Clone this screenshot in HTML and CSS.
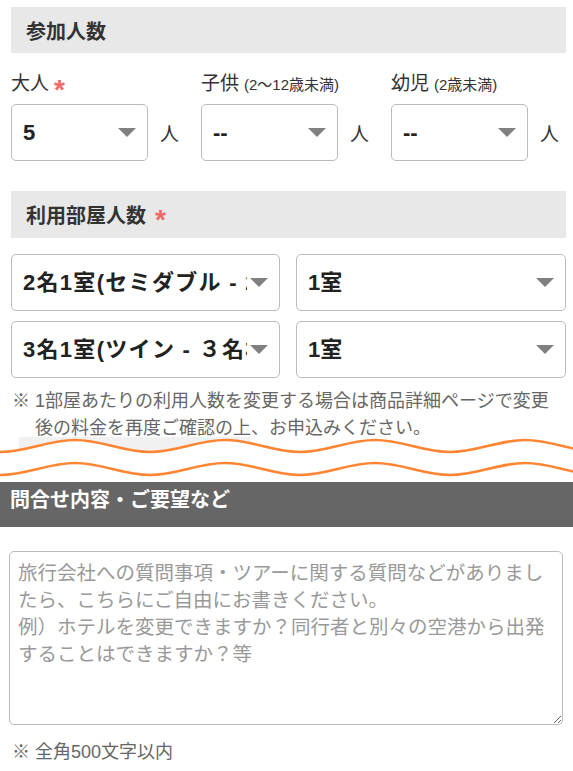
FILE: index.html
```html
<!DOCTYPE html>
<html lang="ja">
<head>
<meta charset="utf-8">
<title>参加人数</title>
<link rel="stylesheet" href="styles.css">
</head>
<body>
<div class="sec-head">参加人数</div>

<div class="pax">
  <div class="pax-col">
    <div class="pax-label">大人<span class="req">*</span></div>
    <div class="pax-row">
      <div class="sel sel-sm"><select><option>5</option></select></div>
      <span class="unit">人</span>
    </div>
  </div>
  <div class="pax-col">
    <div class="pax-label">子供 <small>(2〜12歳未満)</small></div>
    <div class="pax-row">
      <div class="sel sel-sm"><select><option>--</option></select></div>
      <span class="unit">人</span>
    </div>
  </div>
  <div class="pax-col">
    <div class="pax-label">幼児 <small>(2歳未満)</small></div>
    <div class="pax-row">
      <div class="sel sel-sm"><select><option>--</option></select></div>
      <span class="unit">人</span>
    </div>
  </div>
</div>

<div class="sec-head sec-head-2">利用部屋人数<span class="req req-head">*</span></div>

<div class="rooms">
  <div class="sel"><select class="wide"><option>2名1室(セミダブル - 2名様利用)</option></select></div>
  <div class="sel"><select><option>1室</option></select></div>
  <div class="sel"><select class="wide"><option>3名1室(ツイン - ３名様利用)</option></select></div>
  <div class="sel"><select><option>1室</option></select></div>
</div>

<p class="note">※ 1部屋あたりの利用人数を変更する場合は商品詳細ページで変更<br>後の料金を再度ご確認の上、お申込みください。</p>

<div class="cut">
  <div class="cut-block"></div>
  <svg class="wave" width="573" height="45" viewBox="0 0 573 45" aria-hidden="true">
    <path d="M0,15 C27.3,15 47.7,3 75,3 S122.7,15 150,15 S197.7,3 225,3 S272.7,15 300,15 S347.7,3 375,3 S422.7,15 450,15 S497.7,3 525,3 S572.7,15 600,15 L600,45 L0,45 Z" fill="#fff"/>
    <path d="M0,15 C27.3,15 47.7,3 75,3 S122.7,15 150,15 S197.7,3 225,3 S272.7,15 300,15 S347.7,3 375,3 S422.7,15 450,15 S497.7,3 525,3 S572.7,15 600,15" fill="none" stroke="#ff8533" stroke-width="2.6"/>
    <path d="M0,38 C27.3,38 47.7,26 75,26 S122.7,38 150,38 S197.7,26 225,26 S272.7,38 300,38 S347.7,26 375,26 S422.7,38 450,38 S497.7,26 525,26 S572.7,38 600,38" fill="none" stroke="#ff8533" stroke-width="2.6"/>
  </svg>
</div>

<div class="dark-head">問合せ内容・ご要望など</div>

<textarea class="inquiry" placeholder="旅行会社への質問事項・ツアーに関する質問などがありまし&#10;たら、こちらにご自由にお書きください。&#10;例）ホテルを変更できますか？同行者と別々の空港から出発&#10;することはできますか？等"></textarea>

<p class="foot">※ 全角500文字以内</p>
</body>
</html>
```

FILE: styles.css
```css
* { box-sizing: border-box; }

body {
  margin: 0;
  width: 573px;
  font-family: "Liberation Sans", "Noto Sans CJK JP", sans-serif;
  color: #333;
  background: #fff;
}

.sec-head {
  margin: 7px 7px 0 11px;
  height: 46px;
  display: flex;
  align-items: center;
  padding-left: 15px;
  background: #e8e8e8;
  font-size: 20px;
  font-weight: bold;
  color: #333;
}

.sec-head-2 {
  margin-top: 30px;
  height: 47px;
}

.req {
  color: #f06868;
  font-weight: bold;
  font-size: 28px;
  line-height: 1;
  margin-left: 5px;
  position: relative;
  top: 6px;
}

.req-head {
  margin-left: 9px;
  top: 5px;
}

.pax {
  display: grid;
  grid-template-columns: 190px 190px 1fr;
  margin: 19px 0 0 11px;
}

.pax-label {
  display: flex;
  align-items: center;
  font-size: 19px;
  line-height: 24px;
  height: 24px;
  color: #333;
  white-space: nowrap;
}

.pax-label small {
  font-size: 15px;
  margin-left: 5px;
  position: relative;
  top: 1px;
}

.pax-row {
  display: flex;
  align-items: center;
  margin-top: 8px;
}

.unit {
  font-size: 19px;
  margin-left: 12px;
  color: #333;
}

.sel {
  position: relative;
  height: 57px;
}

.sel-sm {
  width: 137px;
}

.sel select {
  -webkit-appearance: none;
  appearance: none;
  display: block;
  width: 100%;
  height: 100%;
  margin: 0;
  border: 1px solid #bbb;
  border-radius: 5px;
  background: #fff;
  padding: 0 32px 0 11px;
  font-family: "Liberation Sans", "Noto Sans CJK JP", sans-serif;
  font-size: 22px;
  font-weight: bold;
  color: #222;
  overflow: hidden;
}

.sel select.wide {
  letter-spacing: 1.3px;
}

.sel::after {
  content: "";
  position: absolute;
  right: 12px;
  top: 24px;
  border-left: 9px solid transparent;
  border-right: 9px solid transparent;
  border-top: 9px solid #808080;
  pointer-events: none;
}

.rooms {
  display: grid;
  grid-template-columns: 269px 270px;
  column-gap: 16px;
  row-gap: 10px;
  margin: 16px 7px 0 11px;
}

.note {
  margin: 10px 7px 0 12px;
  padding-left: 23px;
  text-indent: -23px;
  font-size: 18px;
  line-height: 27px;
  color: #666;
}

.cut {
  position: relative;
  height: 45px;
  margin-top: -5px;
}

.cut-block {
  margin-left: 19px;
  width: 231px;
  height: 20px;
  background: #f1f1f1;
}

.wave {
  position: absolute;
  left: 0;
  top: 0;
  display: block;
}

.dark-head {
  height: 45px;
  background: #666;
  color: #fff;
  font-size: 20px;
  font-weight: bold;
  line-height: 26px;
  padding: 5px 0 0 10px;
}

.inquiry {
  display: block;
  margin: 24px 10px 0 9px;
  width: 554px;
  height: 174px;
  border: 1px solid #bbb;
  border-radius: 5px;
  padding: 8px;
  font-family: "Liberation Sans", "Noto Sans CJK JP", sans-serif;
  font-size: 19.5px;
  line-height: 27px;
  color: #333;
  resize: vertical;
}

.inquiry::placeholder {
  color: #999;
}

.foot {
  margin: 14px 0 0 12px;
  font-size: 18px;
  line-height: 27px;
  color: #666;
}
```
